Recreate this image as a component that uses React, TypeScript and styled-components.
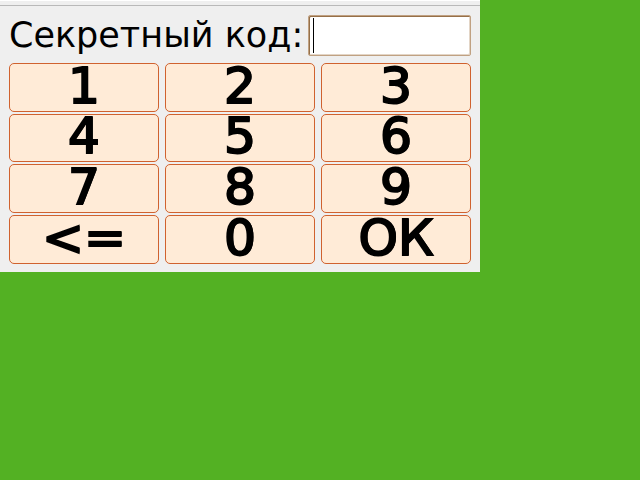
import React, { useState } from "react";
import styled, { createGlobalStyle } from "styled-components";

const GlobalStyle = createGlobalStyle`
  * { box-sizing: border-box; }
  body {
    margin: 0;
    background: #53b123;
    color: #000;
    font-family: "DejaVu Sans", sans-serif;
  }
`;

const Panel = styled.form`
  width: 75%;
  background: #efefef;
  border-top: 1px solid #fff;
  padding-bottom: 8px;
`;

const TopRule = styled.div`
  height: 5px;
  border-bottom: 1px solid #b9b9b9;
`;

const CodeRow = styled.div`
  display: flex;
  align-items: center;
  gap: 5px;
  padding: 9px 9px 7px;
`;

const CodeLabel = styled.label`
  font-size: 35px;
  line-height: 41px;
  white-space: nowrap;
`;

const CodeField = styled.div`
  position: relative;
  flex: 1;
  min-width: 0;
`;

const CodeInput = styled.input`
  display: block;
  width: 100%;
  height: 41px;
  padding: 0 4px;
  border: 1px solid #c0a182;
  border-radius: 2px;
  box-shadow: inset 1px 1px #967048, inset -1px -1px #e3d5c6;
  background: #fff;
  color: #000;
  caret-color: transparent;
  font: 32px "DejaVu Sans", sans-serif;
  outline: none;
`;

const Caret = styled.span`
  position: absolute;
  top: 3px;
  bottom: 3px;
  left: 5px;
  width: 1px;
  background: #000;
  pointer-events: none;
`;

const Keypad = styled.div`
  display: grid;
  grid-template-columns: repeat(3, 1fr);
  grid-template-rows: 49px 48px 49px 49px;
  gap: 2px 6px;
  padding: 0 9px;
`;

const Key = styled.button`
  padding: 0 0 4px;
  border: 1px solid #d0622f;
  border-radius: 5px;
  background: #ffebd7;
  color: #000;
  font: 50px/42px "DejaVu Sans", sans-serif;
  -webkit-text-stroke: 2px #000;
  text-shadow: 1px 0 #000;
`;

const KEYS = ["1", "2", "3", "4", "5", "6", "7", "8", "9", "<=", "0", "ОК"];

export default function App() {
  const [code, setCode] = useState("");

  const press = (key: string) => {
    if (key === "<=") setCode((value) => value.slice(0, -1));
    else if (key !== "ОК") setCode((value) => value + key);
  };

  return (
    <>
      <GlobalStyle />
      <Panel onSubmit={(event) => event.preventDefault()}>
        <TopRule />
        <CodeRow>
          <CodeLabel htmlFor="code">Секретный код:</CodeLabel>
          <CodeField>
            <CodeInput
              id="code"
              type="password"
              autoFocus
              value={code}
              onChange={(event) => setCode(event.target.value)}
            />
            {code === "" && <Caret />}
          </CodeField>
        </CodeRow>
        <Keypad>
          {KEYS.map((key) => (
            <Key
              key={key}
              type={key === "ОК" ? "submit" : "button"}
              onClick={() => press(key)}
            >
              {key}
            </Key>
          ))}
        </Keypad>
      </Panel>
    </>
  );
}
